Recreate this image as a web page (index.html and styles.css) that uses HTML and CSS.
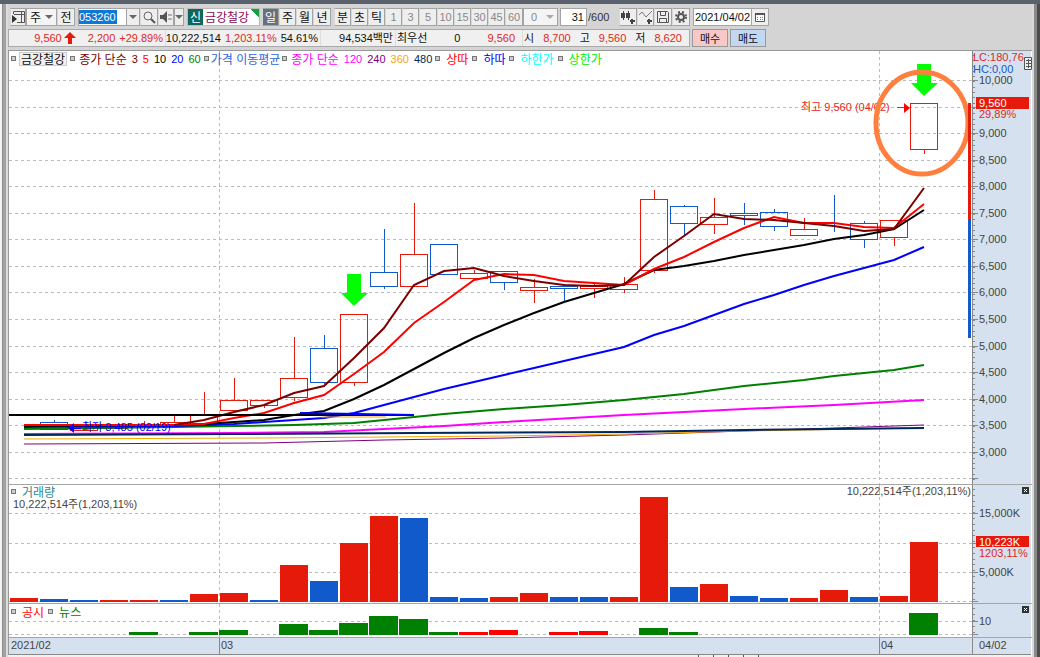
FILE: index.html
```html
<!DOCTYPE html>
<html lang="ko">
<head>
    <meta charset="UTF-8">
    <meta name="viewport" content="width=device-width, initial-scale=1.0">
    <title>금강철강 주식 차트</title>
    <link rel="stylesheet" href="styles.css">
</head>
<body>
    <div class="frame-left"></div>
    <main class="window">
        <form class="toolbar">
            <button type="button" class="btn w16" aria-label="패널"><svg width="14" height="14" viewBox="0 0 14 14"><path d="M2.500 4V1.500h11v11H6M3 4.500h11M10.500 1v11" fill="none" stroke="#555"/><path d="M1 5l5 4-5 4z" fill="#333"/></svg></button>
            <span class="pick w30"><select aria-label="종목 구분"><option>주</option></select></span>
            <button type="button" class="btn w18 gap-r">전</button>
            <span class="code"><input type="text" class="code-input" value="053260" aria-label="종목코드"><button type="button" class="drop" aria-label="종목 목록"></button></span>
            <button type="button" class="btn w18" aria-label="검색"><svg width="14" height="14" viewBox="0 0 14 14"><circle cx="6" cy="6" r="4" fill="none" stroke="#666"/><path d="M9 9l4 4" stroke="#555" stroke-width="2"/></svg></button>
            <button type="button" class="btn w16" aria-label="소리"><svg width="14" height="14" viewBox="0 0 14 14"><path d="M1 5h3l4-4v12L4 9H1z" fill="#555"/><path d="M10 4v6M12 4v6" stroke="#777" stroke-dasharray="2 2"/></svg></button>
            <button type="button" class="btn drop w10" aria-label="소리 설정"></button>
            <span class="stock"><b>신</b><span>금강철강</span></span>
            <button type="button" class="btn w17 on">일</button>
            <button type="button" class="btn w17">주</button>
            <button type="button" class="btn w17">월</button>
            <button type="button" class="btn w18 gap-r">년</button>
            <button type="button" class="btn w17">분</button>
            <button type="button" class="btn w17">초</button>
            <button type="button" class="btn w17">틱</button>
            <button type="button" class="btn w17 off">1</button>
            <button type="button" class="btn w17 off">3</button>
            <button type="button" class="btn w18 off">5</button>
            <button type="button" class="btn w17 off">10</button>
            <button type="button" class="btn w17 off">15</button>
            <button type="button" class="btn w17 off">30</button>
            <button type="button" class="btn w17 off">45</button>
            <button type="button" class="btn w18 off">60</button>
            <span class="pick off w35"><select aria-label="사용자 주기" disabled><option>0</option></select></span>
            <label class="count"><input type="text" class="count-input" value="31" aria-label="봉 개수">/600</label>
            <button type="button" class="btn w18" aria-label="봉 추가"><svg width="16" height="14" viewBox="0 0 16 14"><path d="M1 3h4v5H1zM6 3h4v5H6zM3 1h1v9H3zM8 1h1v9H8z" fill="#444"/><path d="M10 11h5M12 9v5" stroke="#444" stroke-width="2"/></svg></button>
            <button type="button" class="btn w17" aria-label="지표 추가"><svg width="15" height="14" viewBox="0 0 15 14"><path d="M1 5l3-3 4 5 6-6" fill="none" stroke="#777"/><path d="M9 11h5M11 9v5" stroke="#444" stroke-width="2"/></svg></button>
            <button type="button" class="btn w18" aria-label="저장"><svg width="14" height="14" viewBox="0 0 14 14"><path d="M1.500 1.500h10l1 1v10h-11zM4.500 1.500v4h5v-4M3.500 12.500v-4h7v4" fill="none" stroke="#555"/></svg></button>
            <button type="button" class="btn w18 gap-r" aria-label="설정"><svg width="14" height="14" viewBox="0 0 14 14"><circle cx="7" cy="7" r="3" fill="none" stroke="#555" stroke-width="2"/><circle cx="7" cy="7" r="5" fill="none" stroke="#555" stroke-width="2" stroke-dasharray="2 2"/></svg></button>
            <span class="date"><input type="text" class="date-input" value="2021/04/02" aria-label="날짜"><button type="button" class="cal" aria-label="달력"><svg width="12" height="12" viewBox="0 0 12 12"><path d="M1.500 2.500h9v8h-9z" fill="#fff" stroke="#555"/><path d="M1 3h10" stroke="#555" stroke-width="2"/><path d="M3 6.500h1M6 6.500h1M8 6.500h1M3 8.500h1M6 8.500h1M8 8.500h1" stroke="#777"/></svg></button></span>
        </form>

        <div class="quote">
            <div class="quote-box">
                <div class="cell cell-price up">
                    <span>9,560</span>
                    <svg width="12" height="12" viewBox="0 0 12 12"><path d="M6 0l6 6H8v6H4V6H0z" fill="#e61a0a"/></svg>
                    <span>2,200</span>
                    <span>+29.89%</span>
                </div>
                <div class="cell cell-volume"><span>10,222,514</span><span class="up">1,203.11%</span><span>54.61%</span></div>
                <div class="cell cell-amount"><span>94,534백만</span></div>
                <div class="cell cell-best"><span>최우선</span><span>0</span><span class="up">9,560</span></div>
                <div class="cell cell-ohl">
                    <span>시</span><span class="up">8,700</span>
                    <span>고</span><span class="up">9,560</span>
                    <span>저</span><span class="up">8,620</span>
                </div>
            </div>
            <button type="button" class="trade buy">매수</button>
            <button type="button" class="trade sell">매도</button>
        </div>

        <section class="charts">
            <div class="panel">
                <div class="legend">
                    <i></i><span class="name">금강철강</span><i></i>
                    <span class="ma"><span class="ma3">종가 단순</span><span class="num ma3">3</span><span class="num ma5">5</span><span class="num ma10">10</span><span class="num ma20">20</span><span class="num ma60">60</span></span>
                    <i></i><span class="price-ma">가격 이동평균</span><i></i>
                    <span class="ma"><span class="ma120">종가 단순</span><span class="num ma120">120</span><span class="num ma240">240</span><span class="num ma360">360</span><span class="num ma480">480</span></span>
                    <i></i><span class="sig s-red">상따</span><i></i><span class="sig s-blue">하따</span><i></i><span class="sig s-cyan">하한가</span><i></i><span class="sig s-green">상한가</span>
                </div>
                <svg id="price" viewBox="9 51 1023 433"></svg>
            </div>
            <div class="panel">
                <div class="legend short"><i></i><span class="vol-name">거래량</span></div>
                <svg id="volume" viewBox="9 485 1023 118"></svg>
            </div>
            <div class="panel">
                <div class="legend"><i></i><span class="sig s-red">공시</span><i></i><span class="sig s-news">뉴스</span></div>
                <svg id="news" viewBox="9 604 1023 33"></svg>
            </div>
            <svg id="dates" viewBox="9 637 1023 17"></svg>
        </section>
        <div class="scroll"><span></span><span></span><span></span><span></span><span></span></div>
    </main>
    <div class="frame-right"></div>
    <script src="chart.js"></script>
</body>
</html>
```

FILE: styles.css
```css
* {
    box-sizing: border-box;
}
body {
    margin: 0;
    display: flex;
    min-height: 100vh;
    overflow: hidden;
    font-family: "Liberation Sans", "Noto Sans CJK KR", sans-serif;
    font-size: 11px;
    color: #111;
    background-color: #d4d4d4;
    border-top: 4px solid #59616c;
}
.frame-left {
    width: 8px;
    border-left: 2px solid #f4f4f4;
    background: linear-gradient(90deg, #8c8c8c 0 1px, #a2a2a2 1px 4px, #dcdcdc 4px);
}
.frame-right {
    width: 8px;
    background: linear-gradient(90deg, #d8d8d8 0 2px, #8a8a8a 2px 5px, #4c4c4c 5px);
}
.window {
    flex: 1;
    min-width: 0;
}
button, select, .stock, .legend {
    font-family: "Noto Sans CJK KR", sans-serif;
    font-size: 12px;
}
button, select, input {
    margin: 0;
    padding: 0;
    border-radius: 0;
    color: #111;
}
input {
    font-family: inherit;
    font-size: 11px;
    border: none;
}

/* toolbar */
.toolbar {
    display: flex;
    height: 24px;
    padding: 4px 0 2px 2px;
}
.btn {
    display: flex;
    align-items: center;
    justify-content: center;
    border: 1px solid #a3a3a3;
    border-left-color: #d8d8d8;
    background-color: #eee;
    line-height: 14px;
}
.btn svg {
    flex: none;
}
.off {
    color: #888;
    font-family: "Liberation Sans", sans-serif;
    font-size: 11px;
}
.on {
    background-color: #66717f;
    color: #fff;
}
.w10 { width: 10px; }
.w16 { width: 16px; }
.w17 { width: 17px; }
.w18 { width: 18px; }
.w30 { width: 31px; }
.w35 { width: 35px; }
.gap-r {
    margin-right: 3px;
}
.pick {
    position: relative;
    border: 1px solid #a3a3a3;
    background-color: #f4f4f4;
}
.pick select {
    display: block;
    width: 100%;
    height: 16px;
    padding-left: 3px;
    border: none;
    background: none;
    appearance: none;
    line-height: 14px;
}
.pick.off select {
    padding-left: 7px;
    color: #888;
    opacity: 1;
    font-family: inherit;
    font-size: 11px;
}
.pick::after, .drop::after {
    content: "";
    border: 4px solid transparent;
    border-top-color: #666;
    border-bottom: none;
}
.pick::after {
    position: absolute;
    right: 3px;
    top: 6px;
}
.pick.off::after {
    border-top-color: #aaa;
}
.drop {
    display: flex;
    align-items: center;
    justify-content: center;
    border: 1px solid #a3a3a3;
    background-color: #eee;
}
.code {
    display: flex;
    width: 62px;
    border: 1px solid #a3a3a3;
    background-color: #fff;
}
.code-input {
    width: 38px;
    margin: 1px auto 1px 0;
    background-color: #0c79d8;
    color: #fff;
}
.code .drop {
    width: 13px;
    border-width: 0 0 0 1px;
}
.stock {
    display: flex;
    width: 73px;
    margin: 0 2px 0 3px;
    line-height: 16px;
    color: #8b0a50;
    background: linear-gradient(225deg, #12a040 0 6px, #fff 6px);
    border: 1px solid #bbb;
}
.stock b {
    width: 15px;
    margin-right: 2px;
    text-align: center;
    font-weight: normal;
    color: #fff;
    background-color: #0e6660;
}
.count {
    display: flex;
    width: 59px;
    margin-left: 2px;
    line-height: 18px;
    color: #333;
}
.count-input {
    width: 27px;
    margin-right: 1px;
    padding-right: 2px;
    text-align: right;
    border: 1px solid #a3a3a3;
}
.date {
    display: flex;
    width: 76px;
    border: 1px solid #a3a3a3;
    background-color: #fff;
}
.date-input {
    flex: 1;
    min-width: 0;
    padding-left: 1px;
}
.cal {
    display: flex;
    align-items: center;
    justify-content: center;
    width: 17px;
    border: none;
    border-left: 1px solid #a3a3a3;
    background-color: #eee;
}

/* quote line */
.quote {
    display: flex;
    gap: 2px;
    height: 22px;
    padding: 1px 0 3px;
}
.quote-box {
    display: flex;
    width: 682px;
    border: 1px solid #aaa;
    background-color: #f0f0f0;
    line-height: 16px;
}
.cell {
    display: flex;
    justify-content: flex-end;
    gap: 4px;
    padding-right: 2px;
    border-right: 1px solid #ddd;
    white-space: nowrap;
}
.cell svg {
    margin: 2px 8px 0 -2px;
}
.cell-price { width: 157px; }
.cell-volume { width: 155px; }
.cell-amount { width: 75px; }
.cell-best {
    width: 127px;
    padding: 0 7px 0 1px;
    justify-content: space-between;
}
.cell-ohl {
    flex: 1;
    padding: 0 7px 0 1px;
    justify-content: space-between;
    border-right: none;
}
.up {
    color: #e0281c;
}
.trade {
    width: 36px;
    border: 1px solid #999;
    font-size: 11px;
    line-height: 14px;
}
.buy {
    background-color: #f8c8c8;
}
.sell {
    background-color: #c2d8f2;
}

/* charts */
.charts {
    border-top: 1px solid #999;
    border-left: 1px solid #999;
    background-color: #fff;
}
.charts svg {
    display: block;
    width: 100%;
}
.panel {
    position: relative;
    border-bottom: 1px solid #a5a5a5;
}
.legend {
    position: absolute;
    left: 2px;
    top: 0;
    display: flex;
    align-items: center;
    gap: 3px;
    height: 15px;
    white-space: nowrap;
}
.short {
    height: 12px;
}
.legend i {
    width: 5px;
    height: 5px;
    border: 1px solid #777;
    background-color: #ccc;
}
.num {
    font-family: "Liberation Sans", sans-serif;
    font-size: 11px;
}
.name {
    padding: 0 1px;
    line-height: 12px;
    border: 1px solid #ccc;
    background-color: #f0f0f0;
}
.ma {
    display: flex;
    align-items: center;
    gap: 5px;
    padding: 0 0 0 1px;
}
.price-ma {
    margin: 0 -1px;
}
.sig {
    padding: 0 1px 0 3px;
}
.vol-name {
    padding-left: 3px;
    color: #2a8a8c;
}
.price-ma { color: #2c64e0; }
.ma3 { color: #7a0000; }
.ma5 { color: #f00; }
.ma10 { color: #000; }
.ma20 { color: #00f; }
.ma60 { color: #008000; }
.ma120 { color: #f0f; }
.ma240 { color: #800080; }
.ma360 { color: #f5a800; }
.ma480 { color: #00285a; }
.s-red { color: #f00; }
.s-blue { color: #00f; }
.s-cyan { color: #0ff; }
.s-green { color: #0e0; }
.s-news { color: #008000; }

.line {
    fill: none;
    stroke: currentColor;
    stroke-width: 2;
}
.thin {
    stroke-width: 1;
}
.grid {
    stroke: #bbb;
    stroke-dasharray: 3 3;
}
.axis {
    fill: #d6e1ef;
}
.tick {
    stroke: #888;
}
.label {
    fill: #444;
}
.tag, .bar-up {
    fill: #e61a0a;
}
.bar-down {
    fill: #105acb;
}
.bar-news {
    fill: #008000;
}
.bar-notice {
    fill: #f00;
}
.candle-up, .candle-down {
    fill: none;
    stroke: #e61a0a;
}
.candle-down {
    stroke: #105acb;
}
.t-red { fill: #e0281c; }
.t-blue { fill: #105acb; }
.t-low { fill: #00f; }
.t-white { fill: #fff; }

.scroll {
    display: flex;
    justify-content: flex-end;
    gap: 14px;
    height: 3px;
    padding-right: 273px;
    background-color: #f2f2f2;
}
.scroll span {
    width: 1px;
    background-color: #555;
}
```

FILE: chart.js
```js
const X0 = 24;
const STEP = 30;
const AXIS = 972;

// direction, body top, body bottom, high, low
const candles = [
    ['u', 425, 425, 425, 425], ['d', 422, 429, 420, 430], ['u', 428, 430, 427, 430], ['u', 426, 428, 426, 428],
    ['u', 425, 427, 421, 427], ['u', 422, 426, 416, 426], ['u', 415, 425, 392, 425], ['u', 400, 410, 378, 410],
    ['u', 400, 405, 400, 408], ['u', 378, 397, 337, 401], ['d', 348, 382, 335, 384], ['u', 314, 382, 314, 386],
    ['d', 272, 286, 229, 289], ['u', 254, 286, 203, 286], ['d', 244, 274, 244, 274], ['u', 273, 278, 270, 278],
    ['d', 271, 282, 271, 290], ['u', 287, 290, 279, 303], ['d', 286, 288, 284, 301], ['u', 286, 288, 284, 298],
    ['u', 284, 289, 277, 293], ['u', 199, 270, 190, 273], ['d', 206, 223, 205, 235], ['u', 217, 224, 198, 234],
    ['d', 213, 215, 203, 225], ['d', 212, 226, 209, 231], ['u', 229, 235, 218, 236], ['d', 223, 223, 195, 232],
    ['d', 223, 239, 221, 248], ['u', 220, 237, 220, 246], ['u', 103, 149, 103, 154]
];

const averages = [
    ['ma240 thin', '24,444 264,443 384,440 504,438 624,435 744,431 804,429 924,425'],
    ['ma360 thin', '24,439 264,438 384,437 504,436 624,434 744,431 924,428'],
    ['ma120', '24,434 234,433 324,432 384,429 444,426 504,422 624,415 744,409 834,405 924,400'],
    ['ma480', '24,435 234,434 414,433 624,432 744,430 924,428'],
    ['ma60', '24,429 174,427 234,426 294,425 354,423 414,417 444,414 504,409 564,405 624,400 684,394 744,386 804,380 834,376 894,370 924,365'],
    ['ma20', '24,427 174,426 234,424 264,422 294,420 324,418 354,413 384,405 414,397 444,389 474,382 504,375 534,368 564,361 594,354 624,347 654,335 684,326 714,315 744,304 774,295 804,285 834,276 864,268 894,260 924,247'],
    ['ma10', '24,426 174,425 204,424 234,422 264,420 294,415 324,411 354,399 384,385 414,369 444,353 474,338 504,325 534,313 564,302 594,293 624,284 654,270 684,266 714,261 744,255 774,250 804,245 834,239 864,235 894,229 924,210'],
    ['ma5', '24,425 174,425 204,424 234,418 264,413 294,403 324,395 354,374 384,352 414,323 444,302 474,280 504,274 534,275 564,281 594,283 624,285 654,269 684,257 714,242 744,228 774,217 804,223 834,223 864,227 894,228 924,204'],
    ['ma3', '174,425 204,420 234,412 264,405 294,393 324,386 354,358 384,328 414,285 444,271 474,268 504,276 534,281 564,285 594,286 624,285 654,257 684,236 714,214 744,219 774,220 804,223 834,226 864,231 894,229 924,188'],
    ['ma10', '9,415 414,415'],
    ['ma20', '300,413 414,415'],
    ['ma360 thin', '322,417 386,417']
];

const volumes = [
    ['u', 598], ['d', 599], ['d', 600], ['u', 600], ['u', 600], ['d', 600], ['u', 594], ['u', 593],
    ['d', 600], ['u', 565], ['d', 581], ['u', 543], ['u', 516], ['d', 518], ['d', 597], ['d', 598],
    ['u', 597], ['u', 593], ['d', 597], ['d', 597], ['u', 597], ['u', 497], ['d', 587], ['u', 584],
    ['d', 596], ['d', 598], ['u', 598], ['u', 590], ['d', 597], ['u', 596], ['u', 542]
];

// day index, type, top
const news = [
    [4, 'news', 632], [6, 'news', 632], [7, 'news', 630], [9, 'news', 624], [10, 'news', 630],
    [11, 'news', 623], [12, 'news', 616], [13, 'news', 619], [14, 'news', 632], [15, 'notice', 632],
    [16, 'notice', 630], [18, 'notice', 632], [19, 'notice', 631], [21, 'news', 628], [22, 'news', 632],
    [30, 'news', 613]
];

function line(cls, x1, y1, x2, y2) {
    return `<path class="${cls}" d="M${x1} ${y1}L${x2} ${y2}"/>`;
}
function rect(cls, x, y, w, h) {
    return `<rect class="${cls}" x="${x}" y="${y}" width="${w}" height="${h}"/>`;
}
function text(cls, x, y, value) {
    return `<text class="${cls}" x="${x}" y="${y}">${value}</text>`;
}
function months(top, bottom) {
    return line('grid', 219.5, top, 219.5, bottom) + line('grid', 879.5, top, 879.5, bottom);
}
function axis(top, bottom, step) {
    let out = rect('axis', AXIS, top, 59, bottom - top) + line('tick', AXIS + 0.5, top, AXIS + 0.5, bottom);
    for (let y = top + 4; y < bottom; y += step) {
        out += line('tick', AXIS, Math.round(y) + 0.5, AXIS + 3, Math.round(y) + 0.5);
    }
    return out;
}
function closeBox(y) {
    return `<rect x="1022" y="${y}" width="7" height="7" fill="#333"/><path d="M1024 ${y + 2}l3 3m0-3l-3 3" stroke="#fff"/>`;
}

function drawPrice() {
    let out = months(51, 484);
    let scale = axis(51, 484, 5.3);
    for (let p = 10000, n = 0; p >= 2500; p -= 500, n++) {
        const y = Math.round(80 + n * 26.55) + 0.5;
        out += line('grid', 9, y, AXIS, y);
        scale += line('tick', AXIS, y, AXIS + 6, y);
        if (p >= 3000 && p !== 9500) {
            scale += text('label', 979, y + 3, p.toLocaleString('en-US'));
        }
    }
    candles.forEach(([dir, top, bottom, high, low], i) => {
        const x = X0 + i * STEP;
        const cls = dir === 'u' ? 'candle-up' : 'candle-down';
        out += rect(cls, x - 13.5, top + 0.5, 27, bottom - top);
        out += line(cls, x + 0.5, high, x + 0.5, top) + line(cls, x + 0.5, bottom, x + 0.5, low);
    });
    averages.forEach(([cls, points]) => {
        out += `<polyline class="line ${cls}" points="${points}"/>`;
    });
    out += text('t-low', 82, 431, '최저 3,485 (02/19)');
    out += '<path d="M68 428l6-5v10z" fill="#00f"/>' + line('line thin ma20', 72, 428.5, 81, 428.5);
    out += text('t-red', 801, 111, '최고 9,560 (04/02)');
    out += '<path d="M897 107.500h9" stroke="#e0281c"/><path d="M904 103l6 5-6 5z" fill="#f00"/>';
    out += '<path d="M347 274h14v19h7l-14 13-13-13h6z" fill="#0f0"/>';
    out += '<path d="M917 64h14v19h7l-14 13-13-13h6z" fill="#0f0"/>';
    out += '<ellipse cx="922" cy="123" rx="46" ry="51" fill="none" stroke="#ff7f3f" stroke-width="5"/>';
    out += rect('bar-up', 968, 103, 3, 117) + rect('bar-down', 968, 220, 3, 118);
    out += scale;
    out += text('t-red', 973, 61, 'LC:180,76') + text('t-blue', 973, 73, 'HC:0,00');
    out += rect('tag', 976, 97, 53, 12) + text('t-white', 979, 107, '9,560') + text('t-red', 979, 118, '29,89%');
    out += '<path d="M1024.500 57.500h7v12h-7zM1026 60.500h5M1026 63.500h5M1026 66.500h5M1028.500 59v9" fill="#eee" stroke="#555"/>';
    document.getElementById('price').innerHTML = out;
}

function drawVolume() {
    let out = months(485, 603);
    let scale = axis(485, 603, 5.8);
    [513.5, 543.5, 572.5, 601.5].forEach(y => {
        out += line('grid', 9, y, AXIS, y);
        scale += line('tick', AXIS, y, AXIS + 6, y);
    });
    volumes.forEach(([dir, top], i) => {
        out += rect(dir === 'u' ? 'bar-up' : 'bar-down', X0 + i * STEP - 14, top, 28, 602 - top);
    });
    out += text('label', 13, 508, '10,222,514주(1,203,11%)');
    out += `<text class="label" x="971" y="495" text-anchor="end">10,222,514주(1,203,11%)</text>`;
    out += scale + text('label', 979, 517, '15,000K') + text('label', 979, 576, '5,000K');
    out += rect('tag', 976, 536, 53, 11) + text('t-white', 979, 546, '10,223K') + text('t-red', 979, 557, '1203,11%');
    out += closeBox(487);
    document.getElementById('volume').innerHTML = out;
}

function drawNews() {
    let out = months(604, 637);
    let scale = axis(604, 637, 6);
    [621.5, 634.5].forEach(y => {
        out += line('grid', 9, y, AXIS, y);
        scale += line('tick', AXIS, y, AXIS + 6, y);
    });
    news.forEach(([i, type, top]) => {
        out += rect('bar-' + type, X0 + i * STEP - 15, top, 29, 635 - top);
    });
    out += scale + text('label', 979, 625, '10') + closeBox(606);
    document.getElementById('news').innerHTML = out;
}

function drawDates() {
    let out = rect('axis', 9, 637, 1022, 17);
    [219.5, 879.5, 972.5].forEach(x => {
        out += line('tick', x, 637, x, 654);
    });
    out += line('tick', 9, 653.5, 1031, 653.5);
    out += text('label', 11, 648, '2021/02') + text('label', 221, 648, '03') + text('label', 881, 648, '04') + text('label', 979, 648, '04/02');
    document.getElementById('dates').innerHTML = out;
}

drawPrice();
drawVolume();
drawNews();
drawDates();
```
